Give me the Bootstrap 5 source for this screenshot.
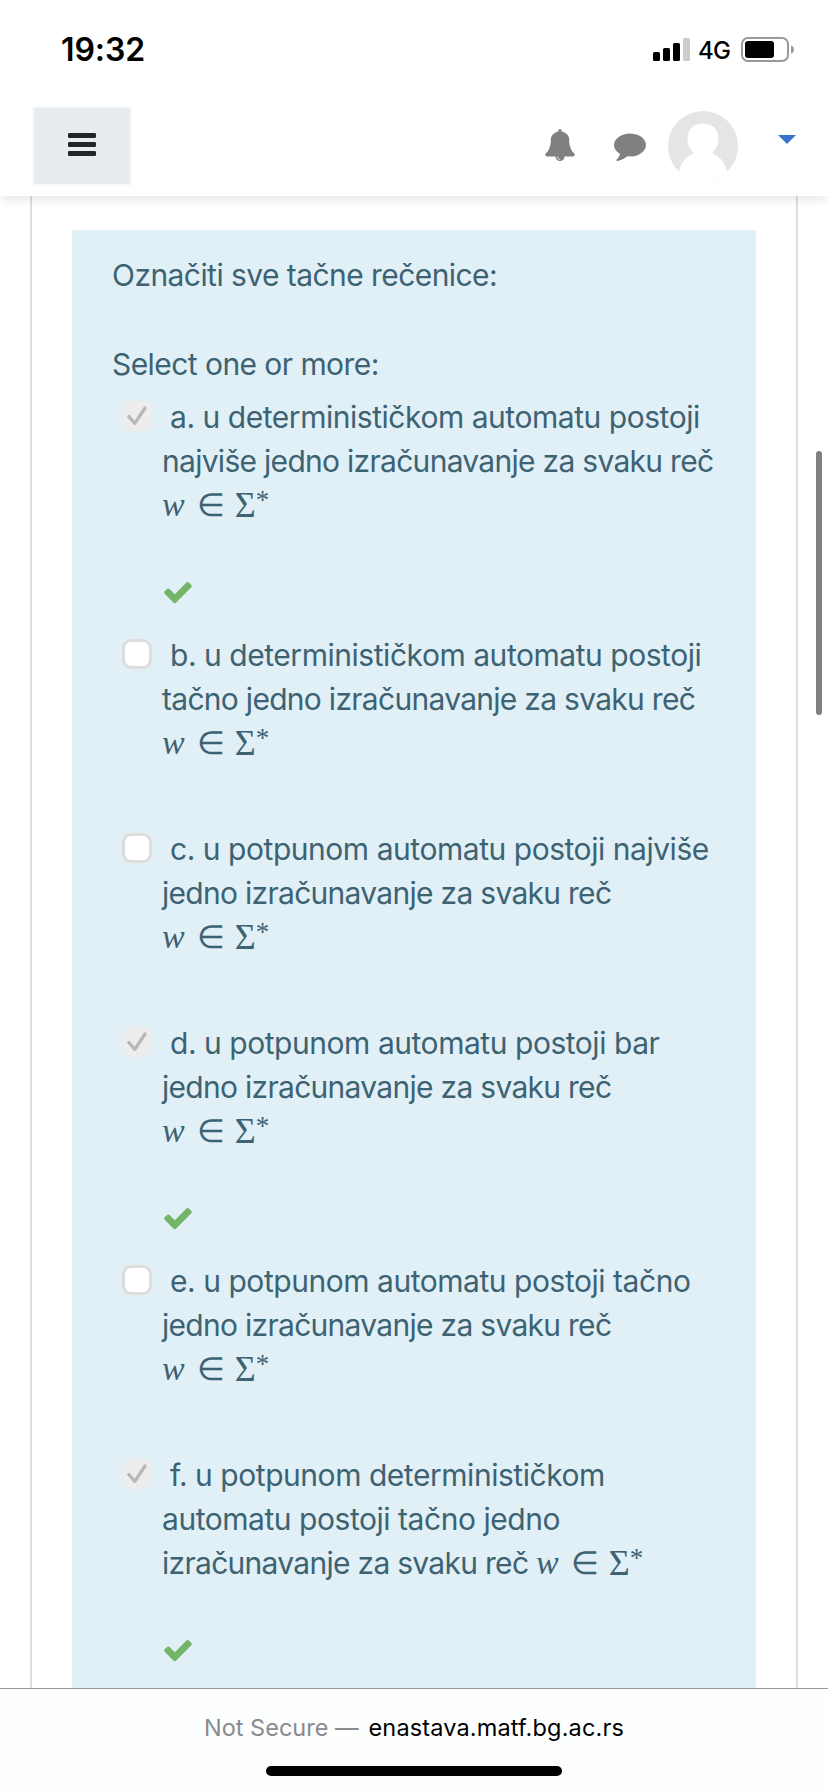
<!DOCTYPE html>
<html lang="sr">
<head>
<meta charset="utf-8">
<meta name="viewport" content="width=device-width, initial-scale=1">
<title>enastava.matf.bg.ac.rs</title>
<link href="https://cdn.jsdelivr.net/npm/bootstrap@5.3.0/dist/css/bootstrap.min.css" rel="stylesheet">
<script src="https://cdn.jsdelivr.net/npm/bootstrap@5.3.0/dist/js/bootstrap.bundle.min.js"></script>
<style>
  body { font-family: Inter, sans-serif; background: #fff; overflow: hidden; }
  .screen { width: 828px; height: 1792px; }
  .topbar { height: 196px; z-index: 2; background: #fff; box-shadow: 0 4px 10px rgba(0,0,0,.09); }
  .status { height: 88px; padding: 0 34px 0 61px; color: #000; }
  .clock { font-size: 32px; font-weight: 600; line-height: 100px; letter-spacing: -.1px; }
  .net { font-size: 24px; font-weight: 500; line-height: 102px; letter-spacing: -.9px; margin: 0 11px 0 8px; }
  .status svg { margin-top: 37px; }
  .tools { padding: 18px 32px 0; }
  .btn-menu { width: 100px; height: 80px; border: 2px solid #f8f9fa; background: #e9ecef; }
  .btn-menu svg { margin-top: 25px; }
  .bell { margin: 23px 38px 0 0; }
  .talk { margin: 23px 22px 0 0; }
  .avatar { margin: 5px 40px 0 0; }
  .caret { margin-top: 29px; }
  .page-frame { margin: 0 30px; border: solid #dedede; border-width: 0 2px; padding: 34px 40px 0; }
  .question { background: #e1f0f7; color: #3d6373; font-size: 30px; line-height: 44px; letter-spacing: -.46px; padding: 23px 0 0 40px; height: 1458px; white-space: nowrap; }
  .prompt { letter-spacing: -.56px; margin-bottom: 45px; }
  .prompt.choose { margin-bottom: 9px; }
  .answer { padding-left: 10px; margin-bottom: 62px; }
  .answer.correct { margin-bottom: 13px; }
  .tick-box { width: 30px; height: 30px; margin: 6px 10px 0 0; border: 3px solid #ddd; border-radius: 9px; background: #fff; }
  .tick-box.checked { border: 0; background: #ededed; }
  .text-line { height: 44px; }
  .lead-line { padding-left: 8px; }
  .tight { letter-spacing: -.71px; }
  .verdict { height: 44px; margin-top: 49px; }
  .formula { display: inline-flex; font-family: "Liberation Serif", serif; font-size: 36px; letter-spacing: 0; }
  .formula i { font-size: 34px; }
  .formula .in { font-size: 32px; margin: 0 10px 0 12px; }
  .formula .star { font-size: 27px; line-height: 34px; }
  .addressbar { height: 104px; border-top: 1px solid #9a9a9d; background: #fdfefe; z-index: 2; font-size: 23.5px; color: #000; }
  .url-line { height: 77px; line-height: 77px; white-space: nowrap; }
  .insecure { color: #8a8a8e; margin-right: 10px; }
  .host { letter-spacing: .15px; }
  .home { width: 296px; height: 10px; border-radius: 5px; background: #000; }
  .scroll-thumb { left: 816px; top: 451px; width: 6px; height: 264px; border-radius: 3px; background: #808080; z-index: 3; }
</style>
</head>
<body>
<svg class="d-none">
  <symbol id="fa-check" viewBox="0 0 1792 1792"><path d="M1671 566q0 40-28 68l-724 724-136 136q-28 28-68 28t-68-28l-136-136-362-362q-28-28-28-68t28-68l136-136q28-28 68-28t68 28l294 295 656-657q28-28 68-28t68 28l136 136q28 28 28 68z"/></symbol>
  <symbol id="tick" viewBox="0 0 30 30"><path d="M6.800 15.500 12.800 22.300 23 7" fill="none" stroke="#b8b8ba" stroke-width="3.300" stroke-linecap="round" stroke-linejoin="round"/></symbol>
</svg>
<div class="screen position-relative d-flex flex-column overflow-hidden">
  <header class="topbar position-relative flex-shrink-0">
    <div class="status d-flex align-items-start">
      <span class="clock me-auto">19:32</span>
      <svg width="37" height="25"><rect y="15" width="7" height="9" rx="1.5"/><rect x="10" y="11" width="7" height="13" rx="1.5"/><rect x="20" y="6" width="7" height="18" rx="1.5"/><rect x="30" y="1" width="7" height="23" rx="1.5" fill="#ccc"/></svg>
      <span class="net">4G</span>
      <svg width="53" height="25"><rect x="1" y="1" width="46" height="23" rx="6" fill="none" stroke="#999" stroke-width="2"/><rect x="4" y="4" width="29" height="17" rx="3"/><path d="M50 8.500q3 1 3 4t-3 4z" fill="#999"/></svg>
    </div>
    <nav class="tools d-flex align-items-start">
      <button class="btn-menu p-0 me-auto d-flex justify-content-center" aria-label="Menu">
        <svg width="28" height="23" fill="#212529"><rect width="28" height="5" rx="1.3"/><rect y="9" width="28" height="5" rx="1.3"/><rect y="18" width="28" height="5" rx="1.3"/></svg>
      </button>
      <svg class="bell" width="32" height="32" viewBox="0 0 1792 1792" fill="#808080"><path d="M912 1696q0-16-16-16-59 0-101.500-42.500t-42.500-101.500q0-16-16-16t-16 16q0 73 51.500 124.500t124.500 51.500q16 0 16-16zm816-288q0 52-38 90t-90 38h-448q0 106-75 181t-181 75-181-75-75-181h-448q-52 0-90-38t-38-90q50-42 91-88t85-119.500 74.500-158.500 50-206 19.500-260q0-152 117-282.500t307-158.500q-8-19-8-39 0-40 28-68t68-28 68 28 28 68q0 20-8 39 190 28 307 158.500t117 282.500q0 139 19.500 260t50 206 74.500 158.500 85 119.500 91 88z"/></svg>
      <svg class="talk" width="32" height="32" viewBox="0 0 1792 1792" fill="#808080"><path d="M1792 896q0 174-120 321.500t-326 233-450 85.500q-70 0-145-8-198 175-460 242-49 14-114 22-17 2-30.500-9t-17.500-29v-1q-3-4-.5-12t2-10 4.500-9.500l6-9 7-8.500 8-9q7-8 31-34.500t34.500-38 31-39.500 32.500-51 27-59 26-76q-157-89-247.500-220t-90.500-281q0-130 71-248.500t191-204.500 286-136.500 348-50.500q244 0 450 85.500t326 233 120 321.500z"/></svg>
      <svg class="avatar" width="70" height="70" viewBox="0 0 70 70"><defs><clipPath id="disc"><circle cx="35" cy="35" r="35"/></clipPath></defs><g clip-path="url(#disc)"><rect width="70" height="70" fill="#e5e5e5"/><path fill="#fff" d="M19.500 27C19.500 17 27 12.500 35 12.500S50.500 17 50.500 27C50.500 34 48 38 44.500 41.500Q45 43 49 45C54 48 57.500 53 59 61V70H11V61C12.500 53 16 48 21 45Q25 43 25.500 41.500C22 38 19.500 34 19.500 27Z"/></g></svg>
      <svg class="caret" width="18" height="9"><path d="M0 0H18L9 9Z" fill="#3773ca"/></svg>
    </nav>
  </header>

  <main class="page-frame flex-grow-1">
    <section class="question">
      <div class="prompt">Označiti sve tačne rečenice:</div>
      <div class="prompt choose">Select one or more:</div>
      <div id="answers"></div>
    </section>
  </main>

  <footer class="addressbar position-relative flex-shrink-0 d-flex flex-column align-items-center">
    <div class="url-line"><span class="insecure">Not Secure —</span><span class="host">enastava.matf.bg.ac.rs</span></div>
    <div class="home"></div>
  </footer>
  <div class="scroll-thumb position-absolute"></div>
</div>
<script>
  const formula = '<span class="formula"><i>w</i><span class="in">∈</span><span>Σ</span><span class="star">*</span></span>';
  const answers = [
    [true, 'a. u determinističkom automatu postoji', '<span class="tight">najviše jedno izračunavanje za svaku reč</span>', formula],
    [false, 'b. u determinističkom automatu postoji', '<span class="tight">tačno jedno izračunavanje za svaku reč</span>', formula],
    [false, 'c. u potpunom automatu postoji najviše', '<span class="tight">jedno izračunavanje za svaku reč</span>', formula],
    [true, 'd. u potpunom automatu postoji bar', '<span class="tight">jedno izračunavanje za svaku reč</span>', formula],
    [false, 'e. u potpunom automatu postoji tačno', '<span class="tight">jedno izračunavanje za svaku reč</span>', formula],
    [true, 'f. u potpunom determinističkom', 'automatu postoji tačno jedno', '<span class="tight">izračunavanje za svaku reč </span>' + formula]
  ];
  document.getElementById('answers').innerHTML = answers.map(([on, first, ...rest]) => `
    <div class="answer d-flex align-items-start ${on ? 'correct' : ''}">
      <span class="tick-box flex-shrink-0 ${on ? 'checked' : ''}">${on ? '<svg class="d-block" width="30" height="30"><use href="#tick"/></svg>' : ''}</span>
      <div>
        <div class="text-line lead-line">${first}</div>
        ${rest.map(t => `<div class="text-line">${t}</div>`).join('')}
        ${on ? '<div class="verdict"><svg class="d-block" width="32" height="32" fill="#73b566"><use href="#fa-check"/></svg></div>' : ''}
      </div>
    </div>`).join('');
</script>
</body>
</html>
